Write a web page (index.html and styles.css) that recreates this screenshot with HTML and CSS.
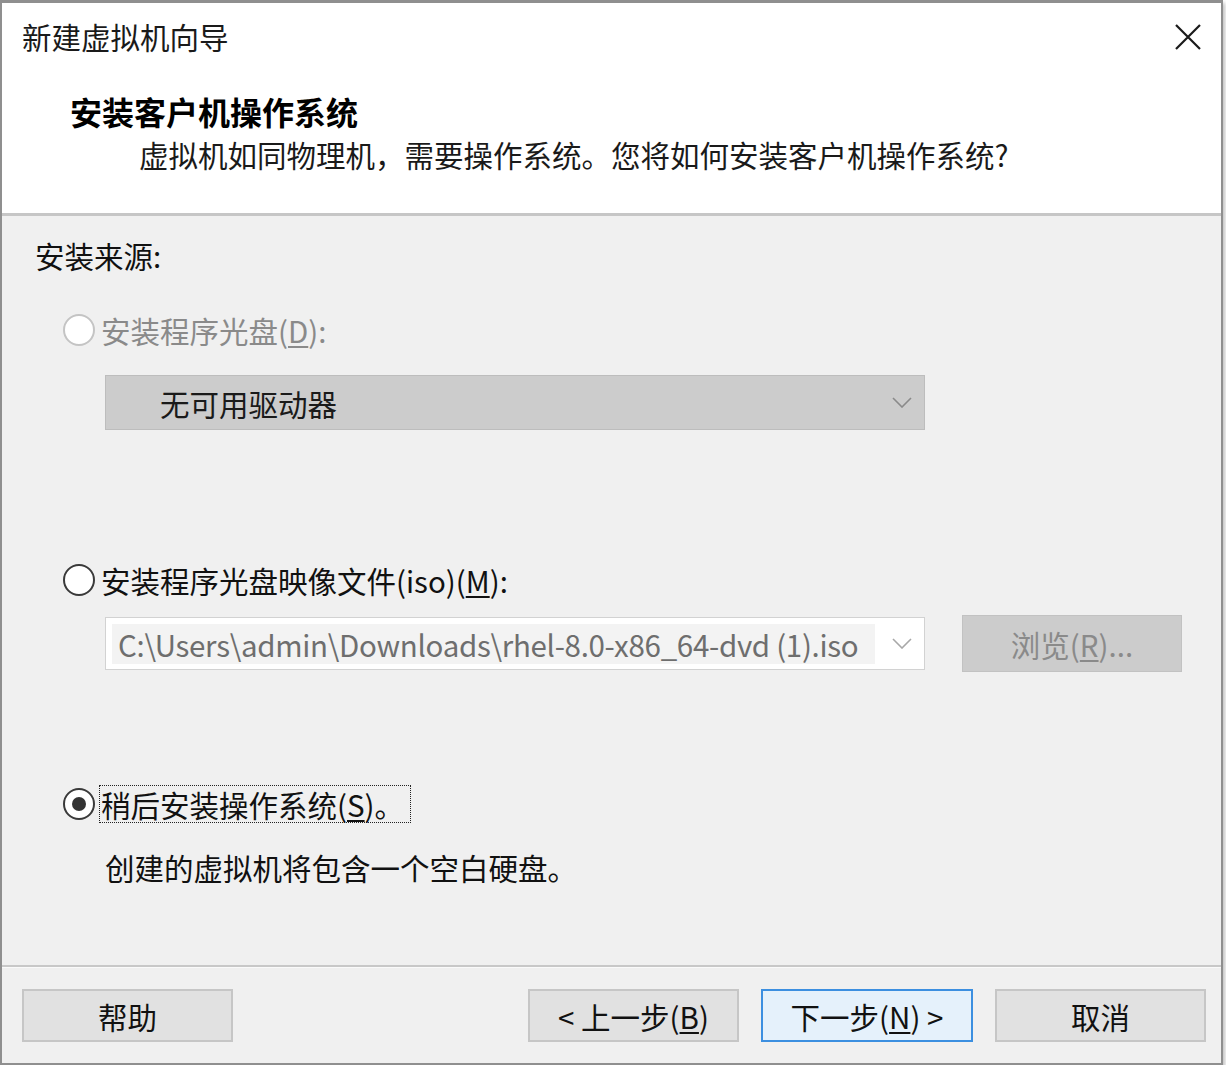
FILE: index.html
```html
<!DOCTYPE html>
<html lang="zh-CN">
<head>
<meta charset="utf-8">
<title>新建虚拟机向导</title>
<link rel="stylesheet" href="styles.css">
</head>
<body>
<div class="window">
  <div class="header">
    <div class="titlebar">
      <span class="title">新建虚拟机向导</span>
      <svg class="close" width="26" height="26" viewBox="0 0 26 26"><path d="M1 1 L25 25 M25 1 L1 25" stroke="#1a1a1a" stroke-width="2.2" fill="none"/></svg>
    </div>
    <div class="heading">安装客户机操作系统</div>
    <div class="subtitle">虚拟机如同物理机，需要操作系统。您将如何安装客户机操作系统?</div>
  </div>
  <div class="body">
    <div class="section">安装来源:</div>
    <div class="radio disabled r1">
      <span class="dot"></span>
      <span class="label">安装程序光盘(<u>D</u>):</span>
    </div>
    <div class="select disabled-select">
      <span class="select-text">无可用驱动器</span>
      <svg class="chev" width="20" height="11" viewBox="0 0 20 11"><path d="M1 1 L10 10 L19 1" stroke="#8a8a8a" stroke-width="1.6" fill="none"/></svg>
    </div>
    <div class="radio r2">
      <span class="dot"></span>
      <span class="label">安装程序光盘映像文件(iso)(<u>M</u>):</span>
    </div>
    <div class="iso-row">
      <div class="combo">
        <span class="combo-text">C:\Users\admin\Downloads\rhel-8.0-x86_64-dvd (1).iso</span>
        <svg class="chev" width="20" height="11" viewBox="0 0 20 11"><path d="M1 1 L10 10 L19 1" stroke="#a8a8a8" stroke-width="1.6" fill="none"/></svg>
      </div>
      <div class="browse">浏览(<u>R</u>)...</div>
    </div>
    <div class="radio checked r3">
      <span class="dot"></span>
      <span class="label focus">稍后安装操作系统(<u>S</u>)。</span>
    </div>
    <div class="desc">创建的虚拟机将包含一个空白硬盘。</div>
  </div>
  <div class="footer">
    <div class="btn">帮助</div>
    <div class="spacer"></div>
    <div class="btn">&lt; 上一步(<u>B</u>)</div>
    <div class="btn default">下一步(<u>N</u>) &gt;</div>
    <div class="btn">取消</div>
  </div>
</div>
</body>
</html>
```
FILE: styles.css
```css
html, body {
  margin: 0;
  padding: 0;
  background: #ffffff;
}
body {
  font-family: "Noto Sans CJK SC", "Noto Sans", sans-serif;
  font-size: 29.5px;
  color: #111;
}
.window {
  width: 1223px;
  height: 1065px;
  box-sizing: border-box;
  border-top: 3px solid #8f8f8f;
  border-left: 2px solid #8f8f8f;
  border-right: 2px solid #8f8f8f;
  border-bottom: 2px solid #8f8f8f;
  background: #f0f0f0;
  display: flex;
  flex-direction: column;
  box-shadow: 2px 3px 4px rgba(0,0,0,0.25);
}
.header {
  height: 213px;
  box-sizing: border-box;
  background: #ffffff;
  border-bottom: 3px solid #c6c6c6;
  padding: 16px 20px 0 20px;
  flex: none;
}
.titlebar {
  display: flex;
  align-items: center;
  justify-content: space-between;
  height: 36px;
}
.title {
  line-height: 36px;
  margin-top: -3px;
  color: #1a1a1a;
}
.close {
  display: block;
}
.heading {
  margin-top: 36px;
  margin-left: 48px;
  font-size: 32px;
  font-weight: bold;
  line-height: 40px;
  color: #000;
}
.subtitle {
  margin-top: 3px;
  margin-left: 117px;
  line-height: 40px;
  color: #1a1a1a;
}
.body {
  flex: 1;
  padding: 19px 0 0 33px;
}
.section {
  line-height: 40px;
  color: #111;
}
.radio {
  display: flex;
  align-items: center;
  height: 40px;
  margin-left: 28px;
}
.r1 { margin-top: 35px; }
.r2 { margin-top: 130px; }
.r3 { margin-top: 112px; }
.dot {
  width: 32px;
  height: 32px;
  box-sizing: border-box;
  border: 2px solid #3a3a3a;
  border-radius: 50%;
  background: #fff;
  flex: none;
  display: flex;
  align-items: center;
  justify-content: center;
}
.radio.disabled .dot {
  border-color: #c4c4c4;
}
.radio.checked .dot::after {
  content: "";
  width: 14px;
  height: 14px;
  border-radius: 50%;
  background: #333;
}
.label {
  margin-left: 4px;
  padding: 0 2px 0 1px;
  border: 1px dotted transparent;
  line-height: 36px;
  color: #111;
}
.radio.disabled .label {
  color: #8a8a8a;
}
.label.focus {
  border-color: #222;
  padding-right: 6px;
}
.select {
  margin-top: 25px;
  margin-left: 70px;
  width: 820px;
  height: 55px;
  box-sizing: border-box;
  display: flex;
  align-items: center;
  justify-content: space-between;
  padding: 0 12px 0 54px;
}
.disabled-select {
  background: #cccccc;
  border: 1px solid #bdbdbd;
}
.select-text {
  color: #1a1a1a;
  line-height: 40px;
}
.iso-row {
  margin-top: 15px;
  margin-left: 70px;
  display: flex;
  align-items: center;
  height: 57px;
}
.combo {
  width: 820px;
  height: 53px;
  box-sizing: border-box;
  background: #ffffff;
  border: 1px solid #d2d2d2;
  display: flex;
  align-items: center;
  justify-content: space-between;
  padding: 6px 12px 6px 6px;
}
.combo-text {
  background: #f3f3f3;
  height: 40px;
  width: 763px;
  box-sizing: border-box;
  padding-left: 6px;
  line-height: 40px;
  color: #6e6e6e;
  letter-spacing: -0.3px;
  white-space: nowrap;
  overflow: hidden;
}
.browse {
  margin-left: 37px;
  width: 220px;
  height: 57px;
  box-sizing: border-box;
  background: #cccccc;
  border: 1px solid #c2c2c2;
  display: flex;
  align-items: center;
  justify-content: center;
  color: #8a8a8a;
}
.desc {
  margin-top: 23px;
  margin-left: 70px;
  line-height: 40px;
  color: #111;
}
.footer {
  flex: none;
  height: 98px;
  box-sizing: border-box;
  border-top: 2px solid #c8c8c8;
  box-shadow: inset 0 1px 0 #fafafa;
  padding: 22px 15px 0 20px;
  display: flex;
  align-items: flex-start;
}
.spacer { flex: 1; }
.btn {
  width: 211px;
  height: 53px;
  box-sizing: border-box;
  background: #e1e1e1;
  border: 2px solid #c6c6c6;
  display: flex;
  align-items: center;
  justify-content: center;
  color: #111;
  margin-left: 22px;
}
.btn:first-child { margin-left: 0; }
.btn.default {
  border-color: #3c8fe0;
  background: #e5f1fb;
  width: 212px;
}
u {
  text-decoration-thickness: 1.5px;
  text-underline-offset: 3px;
}
```
